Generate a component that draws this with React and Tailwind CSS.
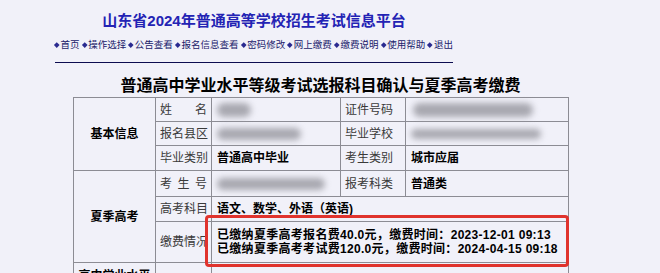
import React from 'react';

const font = { fontFamily: '"Liberation Sans", "Noto Sans CJK SC", sans-serif' };

const navItems = ['首页', '操作选择', '公告查看', '报名信息查看', '密码修改', '网上缴费', '缴费说明', '使用帮助', '退出'];

const Blur = ({ w, h = 12, className = '' }) => (
  <div className={`bg-[#a8a8b0] rounded-full blur-[3px] ${className}`} style={{ width: w, height: h }} />
);

const Spread = ({ chars }) => (
  <div className="flex justify-between w-full">
    {chars.map((c, i) => <span key={i}>{c}</span>)}
  </div>
);

const label = 'border border-[#8c8c94] px-[4px] text-[12px] text-[#3a3a3a] font-normal whitespace-nowrap';
const value = 'border border-[#8c8c94] px-[5px] text-[12px] text-black font-bold whitespace-nowrap';
const group = 'border border-[#8c8c94] text-[12px] text-black font-bold text-center';

const App = () => {
  return (
    <div className="min-h-screen bg-[#f1f1f9] overflow-hidden" style={font}>
      {/* header */}
      <div className="w-[398px] ml-[55px] pt-[7px]">
        <h1 className="text-center text-[15px] leading-[28px] font-bold text-[#2323b4]">
          山东省2024年普通高等学校招生考试信息平台
        </h1>
        <div className="flex justify-between text-[9.5px] leading-[20px] text-[#20206a]">
          {navItems.map(n => (
            <span key={n} className="whitespace-nowrap flex items-center">
              <span className="inline-block w-[3.5px] h-[3.5px] rotate-45 bg-[#2a2a90] mr-[2px]" />{n}
            </span>
          ))}
        </div>
        <div className="mt-[7px] border-b border-[#0c0c50]" />
      </div>

      {/* main */}
      <div className="ml-[73px] w-[495px]">
        <h2 className="text-center text-[16px] leading-[22px] font-bold text-black mt-[12px]">
          普通高中学业水平等级考试选报科目确认与夏季高考缴费
        </h2>
        <div className="relative">
          <table className="w-[495px] border-collapse table-fixed">
            <colgroup>
              <col className="w-[82px]" />
              <col className="w-[56px]" />
              <col className="w-[129px]" />
              <col className="w-[65px]" />
              <col className="w-[163px]" />
            </colgroup>
            <tbody>
              <tr className="h-[24px]">
                <td rowSpan={3} className={group}>基本信息</td>
                <td className={label}><Spread chars={['姓', '名']} /></td>
                <td className={value}><Blur w={34} h={14} /></td>
                <td className={label}>证件号码</td>
                <td className={value}><Blur w={120} h={14} className="ml-[2px]" /></td>
              </tr>
              <tr className="h-[24px]">
                <td className={label}>报名县区</td>
                <td className={value}><Blur w={84} h={12} /></td>
                <td className={label}>毕业学校</td>
                <td className={value}><Blur w={130} h={10} /></td>
              </tr>
              <tr className="h-[25px]">
                <td className={label}>毕业类别</td>
                <td className={value}>普通高中毕业</td>
                <td className={label}>考生类别</td>
                <td className={value}>城市应届</td>
              </tr>
              <tr className="h-[26px]">
                <td rowSpan={3} className={group}>夏季高考</td>
                <td className={label}><Spread chars={['考', '生', '号']} /></td>
                <td className={value}><Blur w={108} h={12} /></td>
                <td className={label}>报考科类</td>
                <td className={value}>普通类</td>
              </tr>
              <tr className="h-[25px]">
                <td className={label}>高考科目</td>
                <td colSpan={3} className={value}>语文、数学、外语（英语)</td>
              </tr>
              <tr className="h-[41px]">
                <td className={label}>缴费情况</td>
                <td colSpan={3} className={`${value} text-[12.5px] tracking-[0.3px] leading-[14px]`}>
                  <div>已缴纳夏季高考报名费40.0元，缴费时间：2023-12-01 09:13</div>
                  <div>已缴纳夏季高考考试费120.0元，缴费时间：2024-04-15 09:18</div>
                </td>
              </tr>
              <tr className="h-[30px]">
                <td className={`${group} align-top pt-[4px]`}>高中学业水平</td>
                <td className={label}></td>
                <td colSpan={3} className={value}></td>
              </tr>
            </tbody>
          </table>
          {/* annotation overlay */}
          <div className="absolute left-[132px] top-[118px] w-[364px] h-[52px] border-[3px] border-[#e0332d] rounded-[4px] pointer-events-none" />
        </div>
      </div>
    </div>
  );
};

export default App;
